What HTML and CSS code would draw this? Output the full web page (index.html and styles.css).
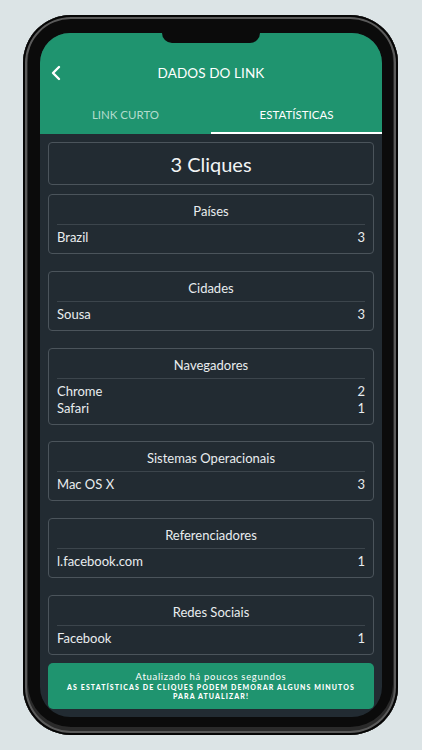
FILE: index.html
```html
<!DOCTYPE html>
<html lang="pt-BR">
<head>
    <meta charset="UTF-8">
    <meta name="viewport" content="width=device-width, initial-scale=1.0">
    <title>Dados do Link</title>
    <link rel="stylesheet" href="styles.css">
</head>
<body>
    <div class="phone">
        <div class="screen">
            <div class="notch"></div>

            <header>
                <div class="title-bar">
                    <button type="button" class="back-btn">
                        <svg width="12" height="16" viewBox="0 0 12 16">
                            <polyline points="9,2 3,8 9,14" fill="none" stroke="#fff" stroke-width="2.4" stroke-linecap="round" stroke-linejoin="round"/>
                        </svg>
                    </button>
                    <h1>DADOS DO LINK</h1>
                </div>
                <nav class="tabs">
                    <div class="tab">LINK CURTO</div>
                    <div class="tab active">ESTATÍSTICAS</div>
                </nav>
            </header>

            <main class="content">
                <div class="total">3 Cliques</div>

                <div class="stats">
                    <section class="card">
                        <h2>Países</h2>
                        <div class="rows">
                            <div class="row"><span>Brazil</span><span>3</span></div>
                        </div>
                    </section>

                    <section class="card">
                        <h2>Cidades</h2>
                        <div class="rows">
                            <div class="row"><span>Sousa</span><span>3</span></div>
                        </div>
                    </section>

                    <section class="card">
                        <h2>Navegadores</h2>
                        <div class="rows">
                            <div class="row"><span>Chrome</span><span>2</span></div>
                            <div class="row"><span>Safari</span><span>1</span></div>
                        </div>
                    </section>

                    <section class="card">
                        <h2>Sistemas Operacionais</h2>
                        <div class="rows">
                            <div class="row"><span>Mac OS X</span><span>3</span></div>
                        </div>
                    </section>

                    <section class="card">
                        <h2>Referenciadores</h2>
                        <div class="rows">
                            <div class="row"><span>l.facebook.com</span><span>1</span></div>
                        </div>
                    </section>

                    <section class="card">
                        <h2>Redes Sociais</h2>
                        <div class="rows">
                            <div class="row"><span>Facebook</span><span>1</span></div>
                        </div>
                    </section>
                </div>

                <div class="notice">
                    <p class="updated">Atualizado há poucos segundos</p>
                    <p class="warning">As estatísticas de cliques podem demorar alguns minutos para atualizar!</p>
                </div>
            </main>
        </div>
    </div>
</body>
</html>
```

FILE: styles.css
```css
body {
    margin: 0;
    padding: 15px 0 0 23px;
    background-color: #dce4e6;
    font-family: 'Lato', 'Noto Sans', sans-serif;
    color: #e9edef;
}

.phone {
    width: 375px;
    height: 720px;
    box-sizing: border-box;
    padding: 18px 16px 18px 17px;
    background-color: #0b0b0b;
    border-radius: 48px;
    box-shadow: inset 0 0 0 2px #050505, inset 0 0 0 4px #5a5a5a, inset 0 -3px 0 5px #2a2a2a;
}

.screen {
    position: relative;
    height: 100%;
    display: flex;
    flex-direction: column;
    background-color: #222b32;
    border-radius: 30px;
    overflow: hidden;
}

.notch {
    position: absolute;
    top: 0;
    left: 122px;
    width: 98px;
    height: 10px;
    background-color: #0b0b0b;
    border-radius: 0 0 10px 10px;
}

header {
    background-color: #1f946f;
    padding-top: 20px;
}

.title-bar {
    height: 40px;
    display: flex;
    align-items: center;
    justify-content: center;
    position: relative;
}

.back-btn {
    position: absolute;
    left: 10px;
    top: 12px;
    padding: 0;
    background: none;
    border: none;
}

.title-bar h1 {
    margin: 0;
    font-size: 13.5px;
    font-weight: 400;
    color: #fff;
    letter-spacing: 0.1px;
}

.tabs {
    display: flex;
    height: 41px;
}

.tab {
    flex: 1;
    display: flex;
    align-items: center;
    justify-content: center;
    padding-top: 3px;
    font-size: 11.5px;
    color: #b3dccd;
    border-bottom: 2px solid transparent;
}

.tab.active {
    color: #fff;
    border-bottom-color: #fff;
}

.content {
    flex: 1;
    padding: 8px 8px 0;
    display: flex;
    flex-direction: column;
}

.total {
    height: 41px;
    border: 1px solid #4b545b;
    border-radius: 4px;
    display: flex;
    align-items: center;
    justify-content: center;
    font-size: 20px;
    color: #f1f4f5;
}

.stats {
    display: flex;
    flex-direction: column;
    gap: 16.8px;
    margin-top: 9px;
}

.card {
    border: 1px solid #4b545b;
    border-radius: 4px;
    padding: 0 8px;
}

.card h2 {
    margin: 0;
    padding: 7px 0 4px;
    line-height: 18px;
    font-size: 13px;
    font-weight: 400;
    text-align: center;
    border-bottom: 1px solid #3c454c;
}

.rows {
    padding: 4px 0 7px;
}

.row {
    display: flex;
    justify-content: space-between;
    line-height: 17px;
    font-size: 13px;
}

.notice {
    margin-top: 8px;
    background-color: #1f946f;
    border-radius: 5px;
    padding: 8px 10px 8px;
    text-align: center;
    color: #fff;
}

.notice p {
    margin: 0;
}

.updated {
    font-size: 9.5px;
    letter-spacing: 0.7px;
    line-height: 12px;
}

.warning {
    margin-top: 4px;
    font-size: 7px;
    font-weight: 900;
    text-transform: uppercase;
    letter-spacing: 1.1px;
    line-height: 9px;
}
```
